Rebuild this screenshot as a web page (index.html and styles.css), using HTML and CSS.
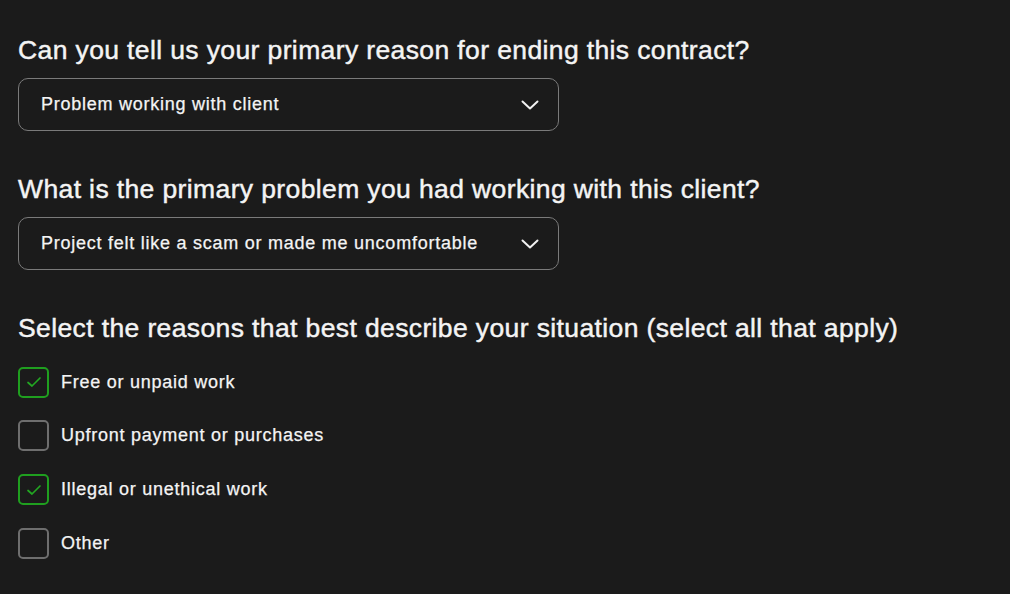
FILE: index.html
```html
<!DOCTYPE html>
<html>
<head>
<meta charset="utf-8">
<link rel="stylesheet" href="styles.css">
</head>
<body>
<main class="form">
  <section class="field">
    <h2 class="question">Can you tell us your primary reason for ending this contract?</h2>
    <div class="select">
      <span class="select-value">Problem working with client</span>
      <svg class="chevron" width="18" height="10" viewBox="0 0 18 10"><path d="M1.5 1.5 L9 8.5 L16.5 1.5" fill="none" stroke="#f2f2f2" stroke-width="2" stroke-linecap="round" stroke-linejoin="round"/></svg>
    </div>
  </section>
  <section class="field">
    <h2 class="question">What is the primary problem you had working with this client?</h2>
    <div class="select">
      <span class="select-value">Project felt like a scam or made me uncomfortable</span>
      <svg class="chevron" width="18" height="10" viewBox="0 0 18 10"><path d="M1.5 1.5 L9 8.5 L16.5 1.5" fill="none" stroke="#f2f2f2" stroke-width="2" stroke-linecap="round" stroke-linejoin="round"/></svg>
    </div>
  </section>
  <section class="field">
    <h2 class="question">Select the reasons that best describe your situation (select all that apply)</h2>
    <ul class="checks">
      <li class="check-row"><span class="box checked"><svg width="16" height="12" viewBox="0 0 16 12"><path d="M2 6.5 L6 10 L14 2" fill="none" stroke="#22a722" stroke-width="1.7" stroke-linecap="round" stroke-linejoin="round"/></svg></span><span class="label">Free or unpaid work</span></li>
      <li class="check-row"><span class="box"></span><span class="label">Upfront payment or purchases</span></li>
      <li class="check-row"><span class="box checked"><svg width="16" height="12" viewBox="0 0 16 12"><path d="M2 6.5 L6 10 L14 2" fill="none" stroke="#22a722" stroke-width="1.7" stroke-linecap="round" stroke-linejoin="round"/></svg></span><span class="label">Illegal or unethical work</span></li>
      <li class="check-row"><span class="box"></span><span class="label">Other</span></li>
    </ul>
  </section>
</main>
</body>
</html>
```
FILE: styles.css
```css
html, body {
  margin: 0;
  padding: 0;
  background: #1b1b1b;
  color: #f4f4f4;
  font-family: "Liberation Sans", Arial, sans-serif;
}
.form {
  padding: 34px 0 0 18px;
  display: flex;
  flex-direction: column;
  gap: 42px;
}
.question {
  margin: 0;
  font-size: 26.5px;
  font-weight: 400;
  line-height: 32px;
  letter-spacing: 0.38px;
  -webkit-text-stroke: 0.45px #f4f4f4;
}
.select {
  margin-top: 12px;
  box-sizing: border-box;
  width: 541px;
  height: 53px;
  border: 1.5px solid #7a7a7a;
  border-radius: 10px;
  display: flex;
  align-items: center;
  justify-content: space-between;
  padding: 0 19px 0 22px;
}
.select-value {
  font-size: 18px;
  letter-spacing: 0.75px;
  -webkit-text-stroke: 0.25px #f4f4f4;
}
.chevron { display: block; }
.checks {
  list-style: none;
  margin: 22px 0 0;
  padding: 0;
  display: flex;
  flex-direction: column;
  gap: 21.8px;
}
.check-row {
  display: flex;
  align-items: center;
  gap: 12px;
  height: 32px;
}
.box {
  box-sizing: border-box;
  width: 31px;
  height: 31px;
  border: 2px solid #6e6e6e;
  border-radius: 5px;
  display: flex;
  align-items: center;
  justify-content: center;
}
.box.checked {
  border-color: #1f9f1f;
}
.label {
  font-size: 18px;
  letter-spacing: 0.75px;
  -webkit-text-stroke: 0.25px #f4f4f4;
}
```
